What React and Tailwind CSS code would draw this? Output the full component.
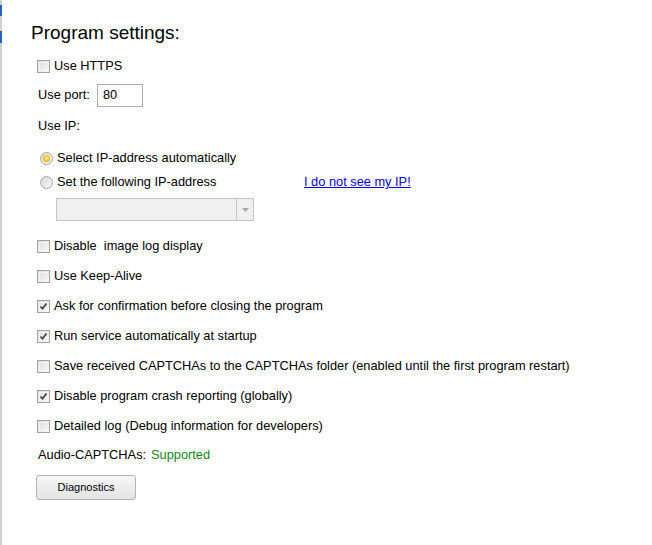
import React from "react";

const Checkbox = ({ checked }) => (
  <span className="relative w-[13px] h-[13px] shrink-0 border border-[#a2a2a2] bg-gradient-to-br from-[#dedede] to-[#f8f8f8] flex items-center justify-center">
    <span className="absolute inset-[1px] border border-[#f4f4f4]" />
    {checked && (
      <svg width="9" height="9" viewBox="0 0 9 9" className="relative">
        <path d="M1.5 4.5 L3.5 6.8 L7.5 1.5" fill="none" stroke="#3c3c3c" strokeWidth="1.6" />
      </svg>
    )}
  </span>
);

const Radio = ({ checked }) => (
  <span className="w-[13px] h-[13px] shrink-0 rounded-full border border-[#a8a8a8] bg-gradient-to-br from-[#d8d8d8] to-[#f6f6f6] flex items-center justify-center">
    {checked && (
      <span className="w-[7px] h-[7px] rounded-full bg-[radial-gradient(circle_at_50%_45%,#fff1a8_0%,#f6c21c_55%,#d99800_100%)]" />
    )}
  </span>
);

const CheckRow = ({ checked, label }) => (
  <div className="h-[30px] flex items-center pl-[35px] gap-[4px]">
    <Checkbox checked={checked} />
    <span className="whitespace-pre">{label}</span>
  </div>
);

const options = [
  { label: "Disable  image log display", checked: false },
  { label: "Use Keep-Alive", checked: false },
  { label: "Ask for confirmation before closing the program", checked: true },
  { label: "Run service automatically at startup", checked: true },
  { label: "Save received CAPTCHAs to the CAPTCHAs folder (enabled until the first program restart)", checked: false },
  { label: "Disable program crash reporting (globally)", checked: true },
  { label: "Detailed log (Debug information for developers)", checked: false },
];

export default function App() {
  return (
    <div className="w-[652px] h-[545px] bg-white flex text-[12.8px] text-black font-['Liberation_Sans',Arial,sans-serif] overflow-hidden">
      <div className="w-[2px] h-full bg-[#d0d0d4] flex flex-col">
        <div className="h-[5px]" />
        <div className="h-[11px] bg-[#1f66c8]" />
        <div className="h-[15px]" />
        <div className="h-[12px] bg-[#1f66c8]" />
      </div>
      <div className="flex-1 flex flex-col">
        <h1 className="pt-[22px] pl-[29px] h-[43px] text-[19px] leading-[21px] whitespace-pre">Program settings:</h1>

        <div className="mt-[8px]">
          <CheckRow checked={false} label="Use HTTPS" />
        </div>

        <div className="h-[28px] flex items-center pl-[36px]">
          <span className="w-[59px]">Use port:</span>
          <div className="w-[46px] h-[23px] border border-[#abadb3] flex items-center pl-[5px]">80</div>
        </div>

        <div className="h-[34px] flex items-center pl-[36px]">Use IP:</div>

        <div className="h-[30px] flex items-center pl-[38px] gap-[4px]">
          <Radio checked />
          <span>Select IP-address automatically</span>
        </div>
        <div className="h-[18px] flex items-center pl-[38px] gap-[4px]">
          <Radio checked={false} />
          <span className="w-[243px]">Set the following IP-address</span>
          <a href="#" className="text-[#0000ff] underline">I do not see my IP!</a>
        </div>

        <div className="mt-[7px] ml-[54px] w-[198px] h-[23px] border border-[#c4c4c4] bg-[#f0f0f0] flex">
          <div className="flex-1" />
          <div className="w-[17px] border-l border-[#c4c4c4] flex items-center justify-center">
            <svg width="7" height="4" viewBox="0 0 7 4">
              <path d="M0 0 L7 0 L3.5 4 Z" fill="#a6a6a6" />
            </svg>
          </div>
        </div>

        <div className="mt-[10px] flex flex-col">
          {options.map((o) => (
            <CheckRow key={o.label} checked={o.checked} label={o.label} />
          ))}
        </div>

        <div className="h-[28px] flex items-center pl-[36px]">
          <span className="w-[113px] shrink-0">Audio-CAPTCHAs:</span>
          <span className="text-[#138a13]">Supported</span>
        </div>

        <button className="mt-[6px] ml-[34px] w-[100px] h-[25px] rounded-[3px] border border-[#b3b3b3] bg-gradient-to-b from-[#f6f6f6] to-[#e4e4e4] text-[11px] flex items-center justify-center">
          Diagnostics
        </button>
      </div>
    </div>
  );
}
